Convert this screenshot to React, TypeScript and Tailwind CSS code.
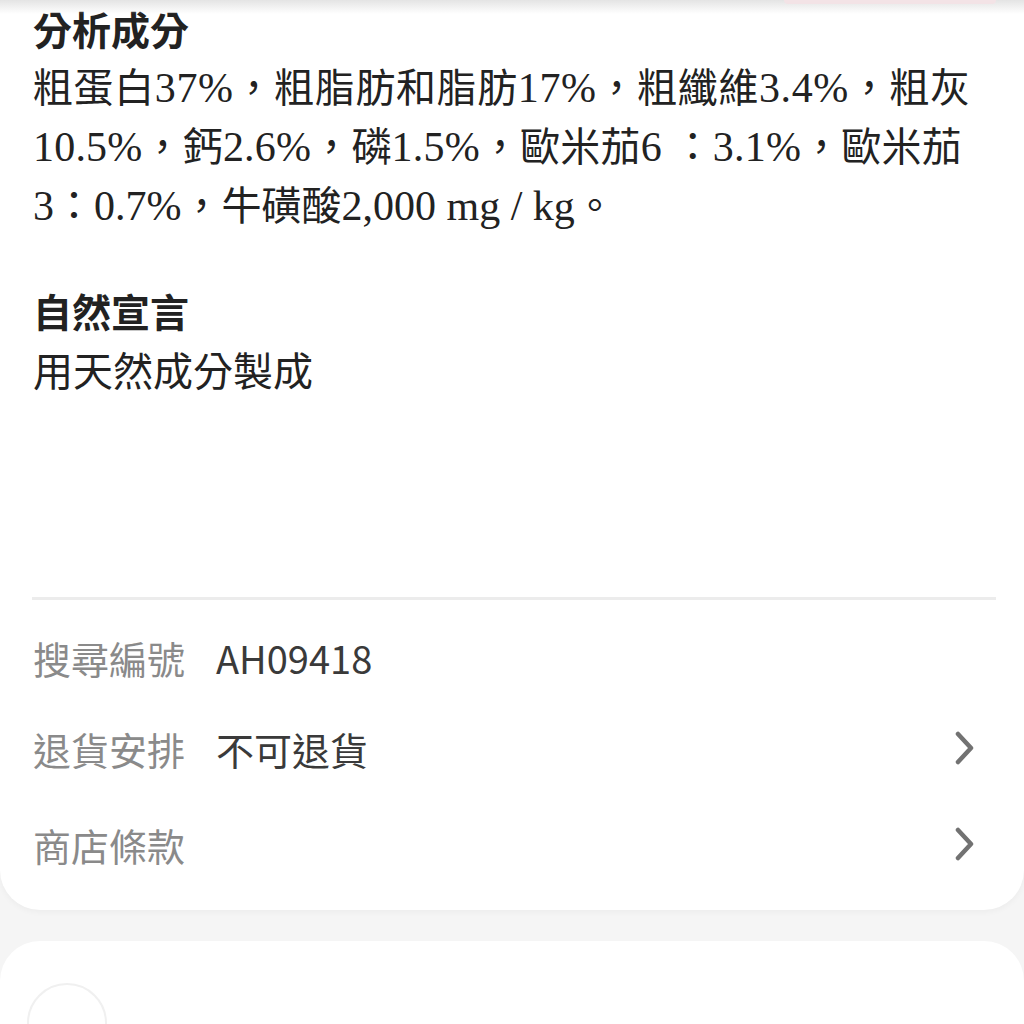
const sans = { fontFamily: '"Noto Sans CJK TC", "Noto Sans", sans-serif' };
const mixed = { fontFamily: '"Liberation Serif", "Noto Sans CJK TC", serif' };

// Latin runs in the ingredients text are set a touch larger than the CJK
function L({ children }: { children: string }) {
  return <span className="text-[42px]">{children}</span>;
}

function InfoRow({ label, value, arrow, className }: { label: string; value?: string; arrow?: boolean; className: string }) {
  return (
    <div className={`flex items-center ${className}`}>
      <span className="w-[183px] shrink-0 text-[38px] text-[#8a8a8a]">{label}</span>
      <span className="flex-1 text-[38px] text-[#3a3a3a]">{value}</span>
      {arrow && (
        <svg width="22" height="34" viewBox="0 0 22 34" className="mr-[48px]">
          <polyline points="4,3 17,17 4,31" fill="none" stroke="#727272" strokeWidth="4.5" strokeLinecap="round" strokeLinejoin="round" />
        </svg>
      )}
    </div>
  );
}

export default function App() {
  return (
    <div lang="zh-TW" className="relative h-[1024px] w-[1024px] overflow-hidden bg-[#f5f5f5]" style={sans}>
      <div className="pointer-events-none absolute left-0 right-0 top-0 h-[14px] bg-gradient-to-b from-[#e4e4e4] to-transparent" />
      <div className="pointer-events-none absolute right-[28px] top-0 h-[4px] w-[212px] rounded-b-full bg-[#f3e3e6]" />

      <div className="rounded-b-[40px] bg-white pb-[16px] shadow-[0_2px_6px_rgba(0,0,0,0.04)]">
        <div className="px-[33px]">
          <h2 className="text-[39px] font-bold leading-[56px] text-[#222]">分析成分</h2>
          <p className="mt-[3px] whitespace-nowrap text-[40px] leading-[59px] text-[#222]" style={mixed}>
            <span className="tracking-[0.6px]">
              粗蛋白<L>37%</L>，粗脂肪和脂肪<L>17%</L>，粗纖維<L>3.4%</L>，粗灰
            </span>
            <br />
            <span className="tracking-[0.2px]">
              <L>10.5%</L>，鈣<L>2.6%</L>，磷<L>1.5%</L>，歐米茄<L>6 </L>：<L>3.1%</L>，歐米茄
            </span>
            <br />
            <L>3</L>：<L>0.7%</L>，牛磺酸<L>2,000 mg / kg</L>。
          </p>

          <h2 className="mt-[44px] text-[39px] font-bold leading-[60px] text-[#222]">自然宣言</h2>
          <p className="text-[40px] leading-[58px] text-[#222]">用天然成分製成</p>
        </div>

        <div className="ml-[32px] mr-[28px] mt-[199px] h-[3px] bg-[#ececec]" />

        <div className="pl-[33px]">
          <InfoRow className="mt-[12px] h-[90px]" label="搜尋編號" value="AH09418" />
          <InfoRow className="h-[92px]" label="退貨安排" value="不可退貨" arrow />
          <InfoRow className="h-[100px]" label="商店條款" arrow />
        </div>
      </div>

      <div className="mt-[31px] h-[200px] rounded-t-[40px] bg-white px-[27px] pt-[42px]">
        <div className="h-[80px] w-[80px] rounded-full border-2 border-[#f0f0f0]" />
      </div>
    </div>
  );
}
